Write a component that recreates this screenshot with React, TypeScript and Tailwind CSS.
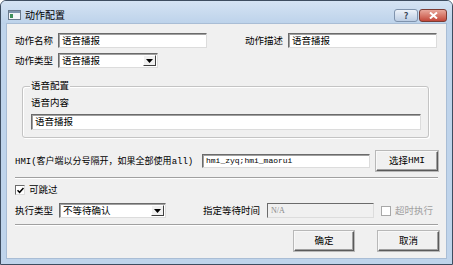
import React from 'react';

const cjk = { fontFamily: '"Noto Sans CJK SC", "Noto Sans", sans-serif' };
const mono = { fontFamily: '"Liberation Mono", "Noto Sans CJK SC", monospace' };

const sunken =
  'bg-white border border-t-[#6b6b6b] border-l-[#6b6b6b] border-r-[#dcdcdc] border-b-[#dcdcdc] shadow-[inset_1px_1px_0_#a0a0a0]';

const TextBox: React.FC<{ w: string; h?: string; value: string; className?: string }> = ({ w, h = 'h-[15px]', value, className = '' }) => (
  <div className={`${sunken} ${w} ${h} flex items-center pl-[3px] text-[9.5px] leading-none text-black ${className}`}>
    {value}
  </div>
);

const Combo: React.FC<{ w: string; value: string }> = ({ w, value }) => (
  <div className={`${sunken} ${w} h-[15px] flex items-center text-[9.5px] leading-none`}>
    <span className="flex-1 pl-[3px]">{value}</span>
    <div className="w-[13px] h-[11px] mr-[1px] bg-[#f0f0f0] border border-t-white border-l-white border-r-[#404040] border-b-[#404040] flex items-center justify-center">
      <svg width="7" height="4" viewBox="0 0 7 4">
        <path d="M0 0h7L3.5 4z" fill="#000" />
      </svg>
    </div>
  </div>
);

const Button: React.FC<{ w: string; h: string; children: React.ReactNode }> = ({ w, h, children }) => (
  <div className={`${w} ${h} bg-[#f0f0f0] border border-t-[#f8f8f8] border-l-[#f8f8f8] border-r-[#5a5a5a] border-b-[#5a5a5a] shadow-[inset_-1px_-1px_0_#a0a0a0,0_0_0_1px_#b8b8b8] flex items-center justify-center text-[9.5px] leading-none`}>
    {children}
  </div>
);

const Check: React.FC<{ checked?: boolean; disabled?: boolean }> = ({ checked, disabled }) => (
  <div className={`w-[10px] h-[10px] bg-white border ${disabled ? 'border-[#a8a8a8]' : 'border-t-[#6b6b6b] border-l-[#6b6b6b] border-r-[#dcdcdc] border-b-[#dcdcdc]'} flex items-center justify-center`}>
    {checked && (
      <svg width="7" height="7" viewBox="0 0 7 7">
        <path d="M0.5 3.2L2.6 5.3L6.5 1" stroke="#000" strokeWidth="1.5" fill="none" />
      </svg>
    )}
  </div>
);

const Separator: React.FC = () => (
  <div className="ml-[8px] w-[423px] h-[2px] border-t border-t-[#a0a0a0] border-b border-b-white" />
);

export default function App() {
  return (
    <div className="w-[453px] h-[265px] bg-[#bfd4eb] border border-[#3e4d60] rounded-t-[6px] flex flex-col overflow-hidden" style={cjk}>
      {/* title bar */}
      <div className="h-[23px] flex items-start pt-[7px] pl-[7px] pr-[5px] bg-gradient-to-b from-[#d5e3f3] to-[#bcd2ea]">
        <svg width="13" height="10" viewBox="0 0 13 10" className="mt-[2px]">
          <rect x="0.5" y="0.5" width="12" height="9" fill="#f4f6f8" stroke="#6a7a8c" />
          <rect x="1" y="1" width="11" height="2" fill="#7f95ad" />
          <rect x="2" y="4" width="3" height="4" fill="#3f8f5a" />
        </svg>
        <span className="ml-[4px] text-[10px] leading-[14px] text-black">动作配置</span>
        <div className="ml-auto flex gap-[1px] mt-[1px]">
          <div className="w-[24px] h-[13px] rounded-[3px] border border-[#7f93ad] bg-gradient-to-b from-[#edf2f9] to-[#bccde3] flex items-center justify-center text-[9px] leading-none text-[#3a4a5c] font-bold">
            ?
          </div>
          <div className="w-[28px] h-[13px] rounded-[3px] border border-[#7b3b33] bg-gradient-to-b from-[#e8a89c] to-[#c2473a] flex items-center justify-center">
            <svg width="9" height="7" viewBox="0 0 9 7">
              <path d="M1 0.5L8 6.5M8 0.5L1 6.5" stroke="#fff" strokeWidth="2" />
            </svg>
          </div>
        </div>
      </div>

      {/* client */}
      <div className="mx-[6px] h-[234px] bg-[#f0f0f0] shadow-[0_0_0_1px_#a9bdd5] flex flex-col text-[9.5px] leading-none text-black">
        <div className="mt-[9px] flex items-center">
          <span className="ml-[8px] w-[43px]">动作名称</span>
          <TextBox w="w-[149px]" value="语音播报" />
          <span className="ml-[38px] w-[43px]">动作描述</span>
          <TextBox w="w-[149px]" value="语音播报" />
        </div>

        <div className="mt-[5px] flex items-center">
          <span className="ml-[8px] w-[43px]">动作类型</span>
          <Combo w="w-[100px]" value="语音播报" />
        </div>

        <div className="mt-[18px] ml-[15px] w-[407px] h-[52px] relative rounded-[3px] border border-[#c4c4c4] shadow-[inset_1px_1px_0_#fff,1px_1px_0_#fff] flex flex-col">
          <span className="absolute left-[7px] top-[-6px] px-[1px] bg-[#f0f0f0]">语音配置</span>
          <span className="mt-[11px] ml-[8px]">语音内容</span>
          <TextBox w="w-[390px]" h="h-[16px]" value="语音播报" className="mt-[6px] ml-[8px]" />
        </div>

        <div className="mt-[13px] flex items-center h-[20px]">
          <span className="ml-[8px] w-[187px] text-[9px] whitespace-nowrap">
            <span style={mono}>HMI(</span>客户端以分号隔开，如果全部使用<span style={mono}>all)</span>
          </span>
          <div className={`${sunken} w-[168px] h-[14px] flex items-center pl-[3px] text-[8px]`} style={mono}>
            hmi_zyq;hmi_maorui
          </div>
          <div className="ml-[6px]">
            <Button w="w-[62px]" h="h-[20px]">
              选择<span style={mono}>HMI</span>
            </Button>
          </div>
        </div>

        <div className="mt-[6px]">
          <Separator />
        </div>

        <div className="mt-[6px] flex items-center h-[10px]">
          <div className="ml-[8px]">
            <Check checked />
          </div>
          <span className="ml-[4px]">可跳过</span>
        </div>

        <div className="mt-[8px] flex items-center">
          <span className="ml-[8px] w-[44px]">执行类型</span>
          <Combo w="w-[107px]" value="不等待确认" />
          <span className="ml-[37px] w-[64px]">指定等待时间</span>
          <div className={`bg-[#f0f0f0] border border-t-[#6b6b6b] border-l-[#6b6b6b] border-r-[#dcdcdc] border-b-[#dcdcdc] w-[107px] h-[15px] flex items-center pl-[3px] text-[8px] text-[#8a8a8a]`} style={{ fontFamily: '"Liberation Serif", serif' }}>
            N/A
          </div>
          <div className="ml-[7px]">
            <Check disabled />
          </div>
          <span className="ml-[4px] text-[#a0a0a0]">超时执行</span>
        </div>

        <div className="mt-[6px]">
          <Separator />
        </div>

        <div className="mt-[5px] flex">
          <div className="ml-[287px]">
            <Button w="w-[60px]" h="h-[20px]">确定</Button>
          </div>
          <div className="ml-[24px]">
            <Button w="w-[61px]" h="h-[20px]">取消</Button>
          </div>
        </div>
      </div>
    </div>
  );
}
